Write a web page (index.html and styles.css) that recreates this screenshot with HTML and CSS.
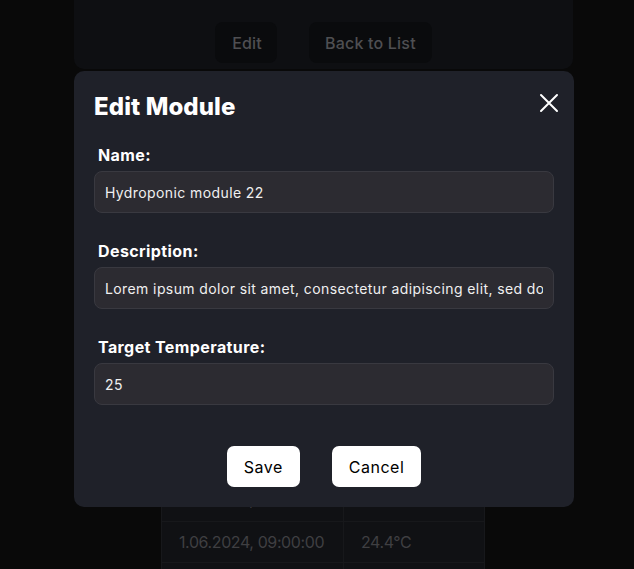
FILE: index.html
```html
<!DOCTYPE html>
<html>
<head>
<meta charset="utf-8">
<link rel="stylesheet" href="styles.css">
</head>
<body>
<div class="page">
  <div class="card">
    <div class="actions">
      <button class="ghost">Edit</button>
      <button class="ghost">Back to List</button>
    </div>
  </div>
  <table class="readings">
    <tr><td></td><td></td></tr>
    <tr class="under"><td>1.06.2024, 08:30:00</td><td>24.2°C</td></tr>
    <tr><td>1.06.2024, 09:00:00</td><td>24.4°C</td></tr>
    <tr><td></td><td></td></tr>
  </table>
</div>
<div class="modal">
  <div class="modal-head">
    <h2 class="title">Edit Module</h2>
    <button class="close" aria-label="Close">
      <svg width="20" height="20" viewBox="0 0 20 20"><path d="M2 2L18 18M18 2L2 18" stroke="#fff" stroke-width="2" stroke-linecap="round" fill="none"/></svg>
    </button>
  </div>
  <div class="field">
    <label class="label" for="name">Name:</label>
    <input class="input" id="name" type="text" value="Hydroponic module 22">
  </div>
  <div class="field">
    <label class="label" for="desc">Description:</label>
    <input class="input" id="desc" type="text" value="Lorem ipsum dolor sit amet, consectetur adipiscing elit, sed do eiusmod tempor">
  </div>
  <div class="field">
    <label class="label" for="temp">Target Temperature:</label>
    <input class="input" id="temp" type="text" value="25">
  </div>
  <div class="buttons">
    <button class="btn">Save</button>
    <button class="btn">Cancel</button>
  </div>
</div>
</body>
</html>
```
FILE: styles.css
```css
* { box-sizing: border-box; }
html, body { margin: 0; padding: 0; }
body {
  background: #090909;
  font-family: Inter, "Open Sans", sans-serif;
  width: 634px;
  height: 569px;
  overflow: hidden;
}
.page {
  display: flex;
  flex-direction: column;
  align-items: flex-start;
  padding-left: 74px;
}
.card {
  width: 499px;
  height: 69px;
  background: #0e0f12;
  border-radius: 0 0 10px 10px;
  display: flex;
  align-items: flex-end;
  justify-content: center;
  padding-bottom: 6px;
}
.actions { display: flex; gap: 32px; }
.ghost {
  font-family: inherit;
  font-size: 16px;
  font-weight: 500;
  letter-spacing: 0.2px;
  color: #4f4f52;
  background: #0a0b0d;
  border: none;
  border-radius: 8px;
  height: 41px;
  padding: 0 16px;
}
.ghost:first-child { padding: 0 15px 0 17px; }
.readings {
  margin-top: 370px;
  margin-left: 87px;
  width: 324px;
  border-collapse: collapse;
  background: #101114;
  color: #3f3f42;
  font-size: 16px;
  letter-spacing: -0.4px;
  table-layout: fixed;
}
.readings td {
  height: 41px;
  border: 1px solid #17181b;
  padding: 0 16px 0 17px;
  white-space: nowrap;
}
.readings .under td { padding-bottom: 4px; }
.readings td:first-child { width: 182px; }
.modal {
  position: fixed;
  left: 74px;
  top: 71px;
  width: 500px;
  height: 436px;
  background: #1f2129;
  border-radius: 10px;
  padding: 18px 20px 0 20px;
  color: #fff;
}
.modal-head {
  display: flex;
  justify-content: space-between;
  align-items: flex-start;
}
.title {
  margin: 0;
  font-size: 24px;
  line-height: 36px;
  font-weight: 800;
  letter-spacing: 0.1px;
}
.close {
  background: none;
  border: none;
  padding: 0;
  margin: 4px -5px 0 0;
  width: 20px;
  height: 20px;
  display: block;
}
.close svg { display: block; }
.field {
  display: flex;
  flex-direction: column;
  gap: 4px;
  margin-top: 18px;
}
.field + .field { margin-top: 26px; }
.label {
  font-size: 16px;
  line-height: 24px;
  font-weight: 700;
  letter-spacing: 0.4px;
  margin-left: 4px;
}
.input {
  display: block;
  width: 100%;
  height: 42px;
  margin: 0;
  background: #2c2b31;
  border: 1px solid #393940;
  border-radius: 8px;
  padding: 0 10px;
  font-family: inherit;
  font-size: 14px;
  letter-spacing: 0.4px;
  color: #f0f0f0;
  outline: none;
}
.buttons {
  display: flex;
  justify-content: center;
  gap: 32px;
  margin-top: 41px;
}
.btn {
  font-family: inherit;
  font-size: 16px;
  font-weight: 400;
  letter-spacing: 0.5px;
  color: #000;
  background: #fff;
  border: none;
  border-radius: 7px;
  height: 41px;
  padding: 0 17px;
}
```
